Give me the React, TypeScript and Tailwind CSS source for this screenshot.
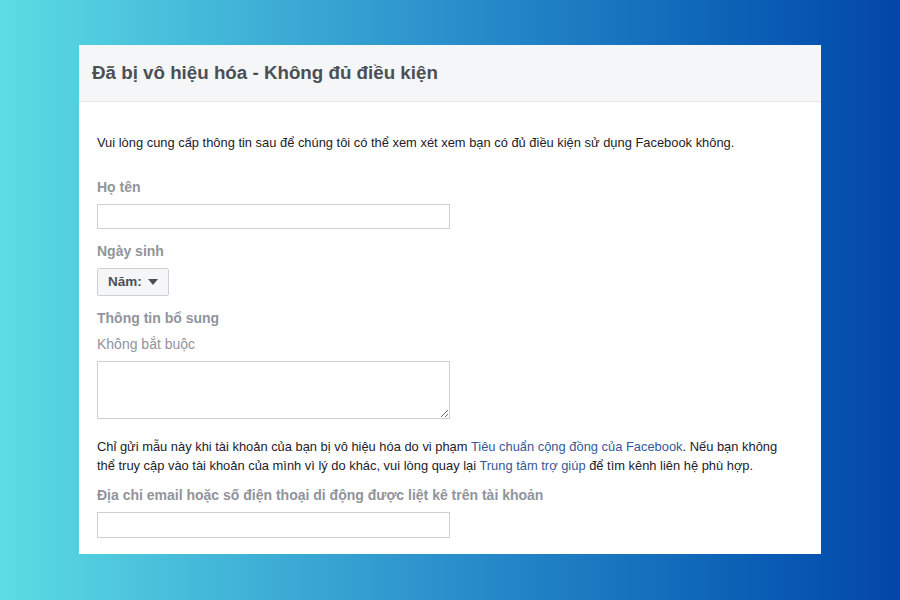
export default function App() {
  return (
    <div
      className="w-[900px] h-[600px] bg-gradient-to-r from-[#5cdce3] via-[#2a8fcb] to-[#0446a9] pt-[45px] pl-[79px]"
      style={{ fontFamily: '"Liberation Sans", Arial, sans-serif' }}
    >
      <div className="w-[742px] h-[509px] bg-white flex flex-col">
        <div className="h-[57px] bg-[#f5f6f7] border-b border-[#e5e5e5] flex items-center px-[13px]">
          <h1 className="text-[18.75px] font-bold text-[#4b4f56]">Đã bị vô hiệu hóa - Không đủ điều kiện</h1>
        </div>

        <div className="px-[18px] pt-[33px] flex flex-col">
          <p className="text-[12.9px] text-[#1d2129] leading-[16px]">
            Vui lòng cung cấp thông tin sau để chúng tôi có thể xem xét xem bạn có đủ điều kiện sử dụng Facebook không.
          </p>

          <label className="mt-[27px] text-[14px] font-bold text-[#90949c] leading-[18px]">Họ tên</label>
          <input
            type="text"
            className="mt-[8px] w-[353px] h-[25px] border border-[#ccd0d5] outline-none px-2 text-[12px]"
          />

          <label className="mt-[13px] text-[14px] font-bold text-[#90949c] leading-[18px]">Ngày sinh</label>
          <div className="mt-[8px]">
            <button className="h-[28px] px-[10px] bg-[#f5f6f7] border border-[#ccd0d5] rounded-[2px] flex items-center gap-[6px] text-[13.5px] font-bold text-[#4b4f56]">
              Năm:
              <svg width="10" height="6" viewBox="0 0 10 6">
                <path d="M0 0h10L5 6z" fill="#4b4f56" />
              </svg>
            </button>
          </div>

          <label className="mt-[13px] text-[14px] font-bold text-[#90949c] leading-[18px]">Thông tin bổ sung</label>
          <span className="mt-[8px] text-[14px] text-[#90949c] leading-[18px]">Không bắt buộc</span>
          <textarea className="mt-[8px] w-[353px] h-[58px] border border-[#ccd0d5] outline-none resize p-1 text-[12px]" />

          <p className="mt-[18px] text-[12.9px] text-[#1d2129] leading-[19px]">
            Chỉ gửi mẫu này khi tài khoản của bạn bị vô hiệu hóa do vi phạm{" "}
            <a className="text-[#365899]">Tiêu chuẩn cộng đồng của Facebook</a>. Nếu bạn không
            <br />
            thể truy cập vào tài khoản của mình vì lý do khác, vui lòng quay lại{" "}
            <a className="text-[#365899]">Trung tâm trợ giúp</a> để tìm kênh liên hệ phù hợp.
          </p>

          <label className="mt-[11px] text-[14px] font-bold text-[#90949c] leading-[18px]">
            Địa chỉ email hoặc số điện thoại di động được liệt kê trên tài khoản
          </label>
          <input
            type="text"
            className="mt-[8px] w-[353px] h-[26px] border border-[#ccd0d5] outline-none px-2 text-[12px]"
          />
        </div>
      </div>
    </div>
  );
}
